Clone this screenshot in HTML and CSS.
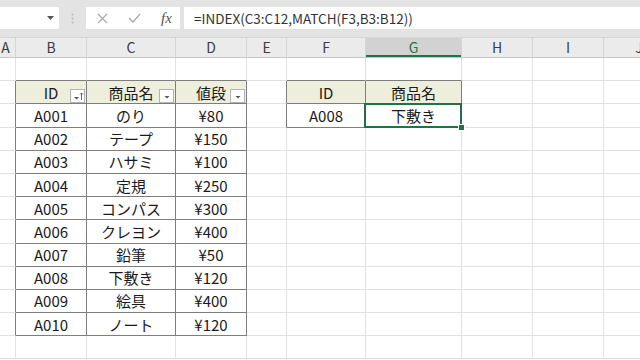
FILE: index.html
```html
<!DOCTYPE html>
<html lang="ja">
<head>
    <meta charset="UTF-8">
    <title>INDEX MATCH</title>
    <link rel="stylesheet" href="styles.css">
</head>
<body>

<div class="app">
    <div class="toolbar">
        <div class="name-box">
            <svg class="caret" width="7" height="4" viewBox="0 0 7 4"><path d="M0 0h7L3.5 4z" fill="#555"/></svg>
        </div>
        <div class="grip">
            <svg width="3" height="11" viewBox="0 0 3 11"><circle cx="1.5" cy="1.5" r="1" fill="#b8b8b8"/><circle cx="1.5" cy="5.5" r="1" fill="#b8b8b8"/><circle cx="1.5" cy="9.5" r="1" fill="#b8b8b8"/></svg>
        </div>
        <div class="fx-box">
            <svg class="icon" width="11" height="11" viewBox="0 0 11 11"><path d="M1 1l9 9M10 1l-9 9" stroke="#a8a8a8" stroke-width="1.2" fill="none"/></svg>
            <svg class="icon" width="13" height="10" viewBox="0 0 13 10"><path d="M1 5l4 4 7-8" stroke="#a8a8a8" stroke-width="1.3" fill="none"/></svg>
            <span class="fx">fx</span>
        </div>
        <div class="formula">=INDEX(C3:C12,MATCH(F3,B3:B12))</div>
    </div>

    <div class="heads">
        <div class="h">A</div>
        <div class="h">B</div>
        <div class="h">C</div>
        <div class="h">D</div>
        <div class="h">E</div>
        <div class="h">F</div>
        <div class="h active">G</div>
        <div class="h">H</div>
        <div class="h">I</div>
        <div class="h">J</div>
    </div>

    <div class="sheet">
        <!-- row 1 -->
        <div class="c"></div><div class="c above"></div><div class="c above"></div><div class="c above"></div><div class="c"></div>
        <div class="c above"></div><div class="c above"></div><div class="c"></div><div class="c"></div><div class="c"></div>

        <!-- row 2 -->
        <div class="c left"></div>
        <div class="c t th">ID<span class="filter"><svg width="12" height="10" viewBox="0 0 12 10"><path d="M2 6h5L4.5 8.5z" fill="#555"/><path d="M9.5 9V2M8 3.5l1.5-1.5 1.5 1.5" stroke="#555" stroke-width="0.9" fill="none"/></svg></span></div>
        <div class="c t th">商品名<span class="filter"><svg width="12" height="10" viewBox="0 0 12 10"><path d="M3.5 5h5L6 7.5z" fill="#555"/></svg></span></div>
        <div class="c t th">値段<span class="filter"><svg width="12" height="10" viewBox="0 0 12 10"><path d="M3.5 5h5L6 7.5z" fill="#555"/></svg></span></div>
        <div class="c left"></div>
        <div class="c t th">ID</div>
        <div class="c t th">商品名</div>
        <div class="c"></div><div class="c"></div><div class="c"></div>

        <!-- row 3 -->
        <div class="c left"></div>
        <div class="c t">A001</div><div class="c t">のり</div><div class="c t">¥80</div>
        <div class="c left"></div>
        <div class="c t">A008</div>
        <div class="c t sel">下敷き</div>
        <div class="c"></div><div class="c"></div><div class="c"></div>

        <!-- row 4 -->
        <div class="c left"></div>
        <div class="c t">A002</div><div class="c t">テープ</div><div class="c t">¥150</div>
        <div class="c"></div><div class="c"></div><div class="c"></div><div class="c"></div><div class="c"></div><div class="c"></div>

        <!-- row 5 -->
        <div class="c left"></div>
        <div class="c t">A003</div><div class="c t">ハサミ</div><div class="c t">¥100</div>
        <div class="c"></div><div class="c"></div><div class="c"></div><div class="c"></div><div class="c"></div><div class="c"></div>

        <!-- row 6 -->
        <div class="c left"></div>
        <div class="c t">A004</div><div class="c t">定規</div><div class="c t">¥250</div>
        <div class="c"></div><div class="c"></div><div class="c"></div><div class="c"></div><div class="c"></div><div class="c"></div>

        <!-- row 7 -->
        <div class="c left"></div>
        <div class="c t">A005</div><div class="c t">コンパス</div><div class="c t">¥300</div>
        <div class="c"></div><div class="c"></div><div class="c"></div><div class="c"></div><div class="c"></div><div class="c"></div>

        <!-- row 8 -->
        <div class="c left"></div>
        <div class="c t">A006</div><div class="c t">クレヨン</div><div class="c t">¥400</div>
        <div class="c"></div><div class="c"></div><div class="c"></div><div class="c"></div><div class="c"></div><div class="c"></div>

        <!-- row 9 -->
        <div class="c left"></div>
        <div class="c t">A007</div><div class="c t">鉛筆</div><div class="c t">¥50</div>
        <div class="c"></div><div class="c"></div><div class="c"></div><div class="c"></div><div class="c"></div><div class="c"></div>

        <!-- row 10 -->
        <div class="c left"></div>
        <div class="c t">A008</div><div class="c t">下敷き</div><div class="c t">¥120</div>
        <div class="c"></div><div class="c"></div><div class="c"></div><div class="c"></div><div class="c"></div><div class="c"></div>

        <!-- row 11 -->
        <div class="c left"></div>
        <div class="c t">A009</div><div class="c t">絵具</div><div class="c t">¥400</div>
        <div class="c"></div><div class="c"></div><div class="c"></div><div class="c"></div><div class="c"></div><div class="c"></div>

        <!-- row 12 -->
        <div class="c left"></div>
        <div class="c t">A010</div><div class="c t">ノート</div><div class="c t">¥120</div>
        <div class="c"></div><div class="c"></div><div class="c"></div><div class="c"></div><div class="c"></div><div class="c"></div>

        <!-- row 13 -->
        <div class="c"></div><div class="c"></div><div class="c"></div><div class="c"></div><div class="c"></div>
        <div class="c"></div><div class="c"></div><div class="c"></div><div class="c"></div><div class="c"></div>
    </div>
</div>

</body>
</html>
```

FILE: styles.css
```css
:root {
    --cols: 20px 71px 89px 71px 40px 79px 96px 71px 71px 71px;
    --grid: #e1e1e1;
    --dark: #7d7d7d;
    --green: #217346;
}

body {
    margin: 0;
    background: #FFFFFF;
    font-family: "Noto Sans CJK JP", "Noto Sans", sans-serif;
    color: #1a1a1a;
    overflow: hidden;
}

.app {
    width: 640px;
    height: 360px;
    overflow: hidden;
}

/* formula bar */
.toolbar {
    display: flex;
    height: 38px;
    padding-top: 7px;
    box-sizing: border-box;
    background: #e3e3e3;
    border-bottom: 1px solid #d6d6d6;
}

.name-box {
    width: 59px;
    height: 22px;
    background: #FFFFFF;
    display: flex;
    align-items: center;
    justify-content: flex-end;
    padding-right: 5px;
    box-sizing: border-box;
}

.grip {
    width: 27px;
    height: 22px;
    display: flex;
    align-items: center;
    justify-content: center;
}

.fx-box {
    width: 94px;
    height: 22px;
    background: #FFFFFF;
    display: flex;
    align-items: center;
    padding-left: 11px;
    box-sizing: border-box;
}

.fx-box .icon {
    margin-right: 20px;
}

.fx {
    font-family: "Liberation Serif", serif;
    font-style: italic;
    font-size: 15px;
    color: #555555;
}

.formula {
    flex: 1;
    height: 22px;
    margin-left: 4px;
    padding-left: 10px;
    background: #FFFFFF;
    font-size: 13.5px;
    line-height: 22px;
    color: #333333;
    white-space: nowrap;
}

/* column headers */
.heads {
    display: grid;
    grid-template-columns: var(--cols);
    height: 19px;
    margin-left: -4px;
    background: #ebebeb;
    border-bottom: 1px solid #c6c6c6;
}

.h {
    border-right: 1px solid #d4d4d4;
    font-size: 14px;
    line-height: 19px;
    text-align: center;
    color: #3c3c3c;
}

.h.active {
    background: #d2d2d2;
    color: var(--green);
    box-shadow: inset 0 -2px 0 var(--green);
}

/* cells */
.sheet {
    display: grid;
    grid-template-columns: var(--cols);
    grid-auto-rows: 23.2px;
    margin-left: -4px;
}

.c {
    border-right: 1px solid var(--grid);
    border-bottom: 1px solid var(--grid);
    display: flex;
    align-items: center;
    justify-content: center;
    font-size: 15px;
    white-space: nowrap;
    position: relative;
}

.c.t {
    border-right-color: var(--dark);
    border-bottom-color: var(--dark);
}

.c.above {
    border-bottom-color: var(--dark);
}

.c.left {
    border-right-color: var(--dark);
}

.th {
    background: #eeeedc;
}

.filter {
    position: absolute;
    right: 1px;
    bottom: 0;
    width: 15px;
    height: 14px;
    box-sizing: border-box;
    border: 1px solid #b3b3b3;
    background: #FFFFFF;
    display: flex;
    align-items: center;
    justify-content: center;
}

.sel::after {
    content: "";
    position: absolute;
    top: -1px;
    left: -2px;
    right: -1px;
    bottom: -1px;
    border: 2px solid var(--green);
}

.sel::before {
    content: "";
    position: absolute;
    right: -4px;
    bottom: -4px;
    width: 5px;
    height: 5px;
    background: var(--green);
    border: 1px solid #FFFFFF;
    z-index: 1;
}
```
